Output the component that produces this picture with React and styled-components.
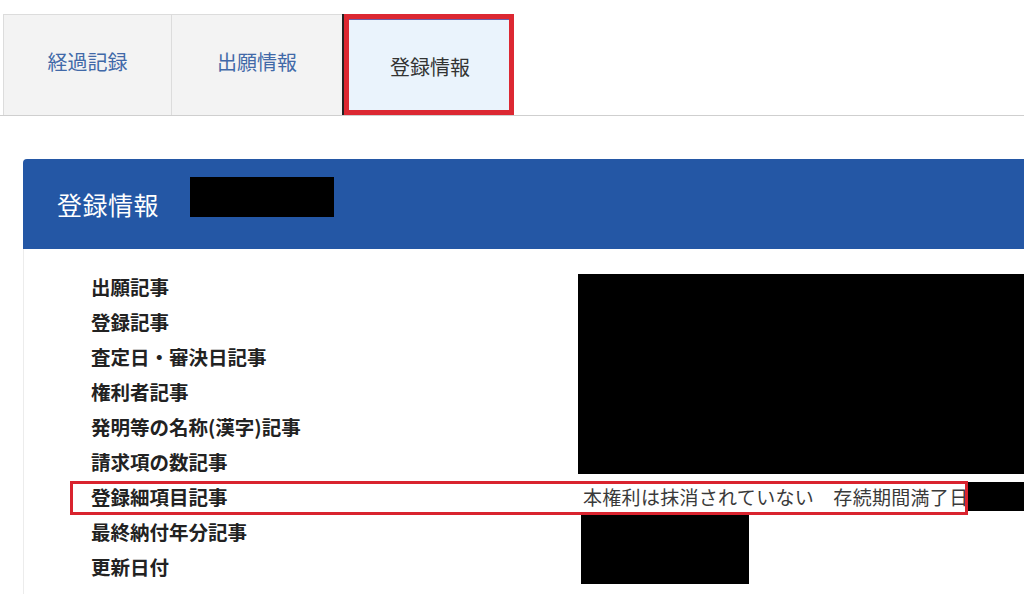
import React from 'react';
import styled, { createGlobalStyle } from 'styled-components';

const GlobalStyle = createGlobalStyle`
    html, body {
        margin: 0;
        padding: 0;
        background: #ffffff;
        overflow: hidden;
    }
    body {
        font-family: "Noto Sans CJK JP", "Noto Sans", sans-serif;
        color: #222;
    }
`

const Page = styled.div`
    width: 1024px;
    height: 594px;
    overflow: hidden;
`

const TabBar = styled.div`
    display: flex;
    margin-top: 14px;
    padding-left: 3px;
    border-bottom: 1px solid #cfcfcf;
`

const Tab = styled.div`
    box-sizing: border-box;
    width: ${props => props.width}px;
    height: 101px;
    display: flex;
    align-items: center;
    justify-content: center;
    font-size: 20px;
    background: ${props => props.active ? '#eaf3fc' : '#f3f3f3'};
    color: ${props => props.active ? '#333' : '#4169a8'};
    border: 1px solid #dcdcdc;
    border-bottom: none;
    border-right: ${props => props.last ? '1px solid #dcdcdc' : 'none'};
    padding-left: ${props => props.shift || 0}px;
    padding-bottom: ${props => props.active ? 0 : 8}px;

    ${props => props.active && `
        border: none;
        border-left: 2px solid #222;
        box-shadow: inset 0 0 0 5px #dc2832, inset 0 6px 0 0 #6a5fa8;
        padding-top: 4px;
    `}
`

const Panel = styled.div`
    margin: 43px 0 0 23px;
    width: 1020px;
`

const PanelHeader = styled.div`
    height: 90px;
    box-sizing: border-box;
    background: #2457a5;
    border-top-left-radius: 4px;
    display: flex;
    align-items: center;
    padding-left: 34px;
`

const HeaderTitle = styled.h2`
    margin: 0;
    font-size: 25px;
    font-weight: 400;
    color: #ffffff;
    letter-spacing: 0.5px;
`

const Redact = styled.div`
    background: #000;
    width: ${props => props.w ? `${props.w}px` : 'auto'};
    height: ${props => props.h}px;
    margin-left: ${props => props.ml || 0}px;
    margin-top: ${props => props.mt || 0}px;
    flex: ${props => props.grow ? 1 : 'none'};
`

const PanelBody = styled.div`
    border-left: 1px solid #ececec;
    padding: 20px 0 0 67px;
    display: grid;
    grid-template-columns: 492px 1fr;
    grid-auto-rows: 35px;
    height: 400px;
`

const Label = styled.div`
    grid-column: 1;
    grid-row: ${props => props.row};
    font-size: 19.5px;
    font-weight: 700;
    line-height: 35px;
    color: #222;
    white-space: nowrap;
`

const ValueBlock = styled.div`
    grid-column: 2;
    grid-row: ${props => props.row} / span ${props => props.span};
    background: #000;
    margin: ${props => props.m};
    width: ${props => props.w ? `${props.w}px` : 'auto'};
`

const ValueRow = styled.div`
    grid-column: 2;
    grid-row: ${props => props.row};
    display: flex;
    align-items: center;
`

const ValueText = styled.span`
    font-size: 19px;
    line-height: 35px;
    color: #3a3a3a;
    letter-spacing: 0.3px;
    width: 384px;
    white-space: nowrap;
    overflow: hidden;
`

const Highlight = styled.div`
    grid-column: 1 / -1;
    grid-row: ${props => props.row};
    box-sizing: border-box;
    margin: 2px 0 0 -21px;
    width: 898px;
    height: 34px;
    border: 3px solid #d9232e;
    pointer-events: none;
    z-index: 2;
`

const labels = [
    '出願記事',
    '登録記事',
    '査定日・審決日記事',
    '権利者記事',
    '発明等の名称(漢字)記事',
    '請求項の数記事',
    '登録細項目記事',
    '最終納付年分記事',
    '更新日付',
];

const App = () => {
    return (
        <Page>
            <GlobalStyle />
            <TabBar>
                <Tab width={168}>経過記録</Tab>
                <Tab width={171}>出願情報</Tab>
                <Tab width={172} active shift={2}>登録情報</Tab>
            </TabBar>
            <Panel>
                <PanelHeader>
                    <HeaderTitle>登録情報</HeaderTitle>
                    <Redact w={144} h={40} ml={31} mt={-14} />
                </PanelHeader>
                <PanelBody>
                    {labels.map((label, i) => (
                        <Label key={label} row={i + 1}>{label}</Label>
                    ))}
                    <ValueBlock row={1} span={6} m="5px 0 5px -5px" />
                    <ValueRow row={7}>
                        <ValueText>本権利は抹消されていない　存続期間満了日</ValueText>
                        <Redact grow h={29} />
                    </ValueRow>
                    <Highlight row={7} />
                    <ValueBlock row={8} span={2} m="1px 0 0 -2px" w={168} />
                </PanelBody>
            </Panel>
        </Page>
    )
}

export default App;
